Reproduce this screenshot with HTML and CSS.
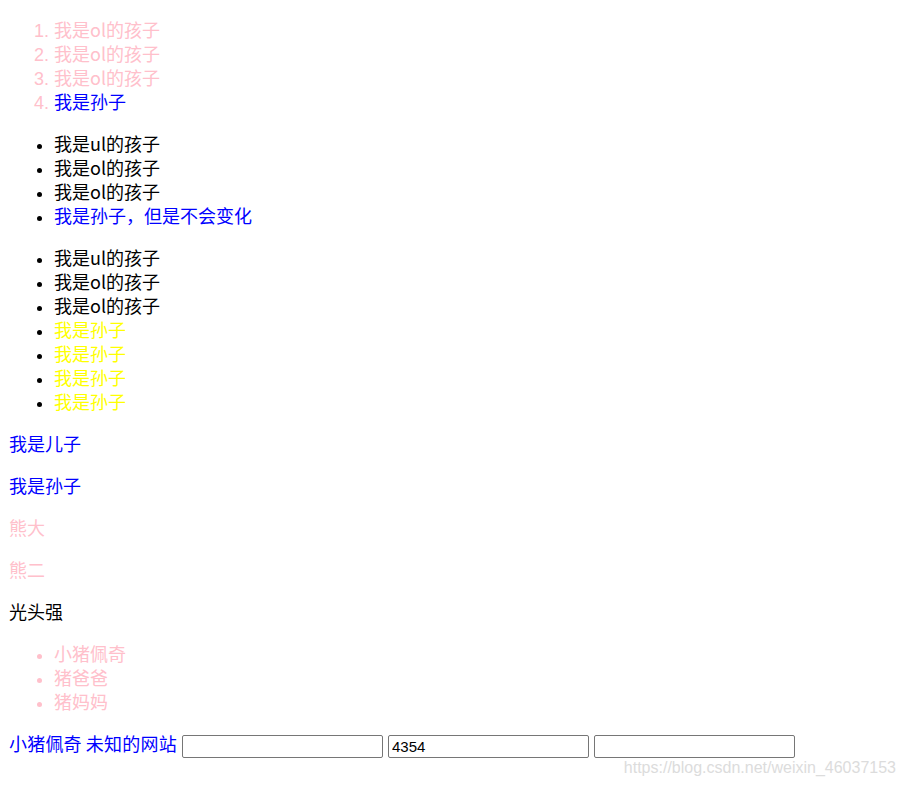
FILE: index.html
```html
<!DOCTYPE html>
<html lang="zh-CN">
<head>
<meta charset="utf-8">
<title>选择器</title>
<link rel="stylesheet" href="styles.css">
</head>
<body>
<ol class="list pink">
  <li>我是ol的孩子</li>
  <li>我是ol的孩子</li>
  <li>我是ol的孩子</li>
  <li><span class="blue">我是孙子</span></li>
</ol>
<ul class="list">
  <li>我是ul的孩子</li>
  <li>我是ol的孩子</li>
  <li>我是ol的孩子</li>
  <li><span class="blue">我是孙子，但是不会变化</span></li>
</ul>
<ul class="list">
  <li>我是ul的孩子</li>
  <li>我是ol的孩子</li>
  <li>我是ol的孩子</li>
  <li class="yellow">我是孙子</li>
  <li class="yellow">我是孙子</li>
  <li class="yellow">我是孙子</li>
  <li class="yellow">我是孙子</li>
</ul>
<p class="para blue">我是儿子</p>
<p class="para blue">我是孙子</p>
<p class="para pink">熊大</p>
<p class="para pink">熊二</p>
<p class="para">光头强</p>
<ul class="list pink">
  <li>小猪佩奇</li>
  <li>猪爸爸</li>
  <li>猪妈妈</li>
</ul>
<p class="para form"><span class="blue label">小猪佩奇</span> <span class="blue label">未知的网站</span> <input class="field" type="text"> <input class="field" type="text" value="4354"> <input class="field" type="text"></p>
<div class="watermark">https://blog.csdn.net/weixin_46037153</div>
</body>
</html>
```
FILE: styles.css
```css
html, body {
  background: #ffffff;
}
body {
  margin: -1px 9px 9px;
  font-family: "Noto Sans CJK SC", "Noto Sans", sans-serif;
  font-size: 18px;
  line-height: 24px;
  color: #000000;
}
.list {
  margin: 18px 0;
  padding-left: 45px;
}
.para {
  margin: 18px 0;
}
.pink {
  color: #ffc0cb;
}
.blue {
  color: #0000ff;
}
.yellow {
  color: #ffff00;
}
.label {
  letter-spacing: 0.2px;
}
.list li::marker {
  font-family: "Liberation Sans", Arial, sans-serif;
}
ul.list:not(.pink) li::marker {
  color: #000000;
}
.field {
  width: 201px;
  height: 23px;
  box-sizing: border-box;
  margin: 0 0 0 1px;
  padding: 1px 3px;
  border: 1px solid #767676;
  border-radius: 2px;
  font-family: "Liberation Sans", Arial, sans-serif;
  font-size: 15px;
  color: #000000;
  vertical-align: middle;
}
.watermark {
  position: absolute;
  right: 9px;
  top: 757px;
  font-family: "Liberation Sans", Arial, sans-serif;
  font-size: 16px;
  line-height: 22px;
  color: #dcdcdc;
}
```
